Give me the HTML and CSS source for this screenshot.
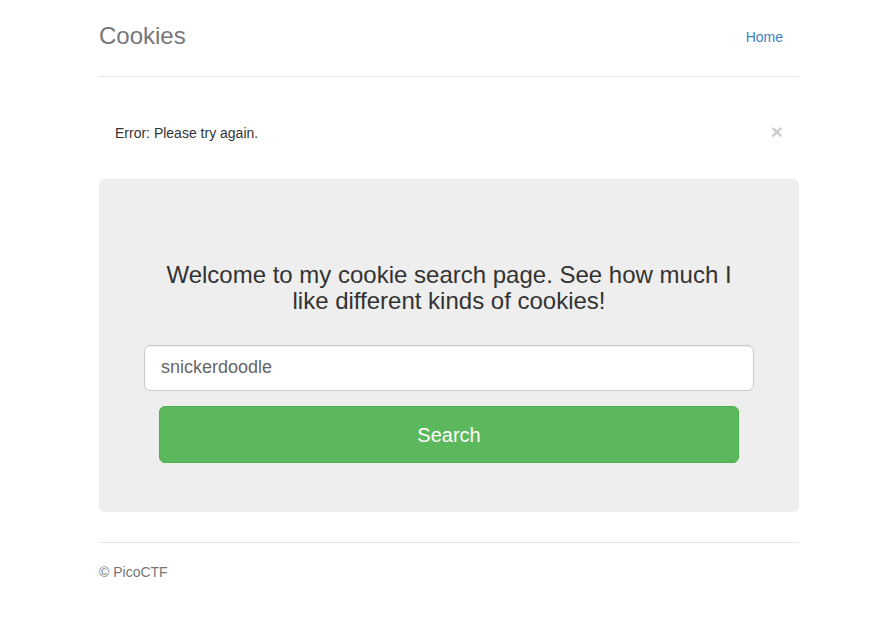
FILE: index.html
```html
<!DOCTYPE html>
<html lang="en">
<head>
<meta charset="utf-8">
<title>Cookies</title>
<link rel="stylesheet" href="styles.css">
</head>
<body>
<div class="container">
  <div class="header">
    <h3 class="brand">Cookies</h3>
    <nav class="nav">
      <a class="nav-link" href="#">Home</a>
    </nav>
  </div>

  <div class="alert">
    <span class="alert-text">Error: Please try again.</span>
    <button class="close" type="button">&times;</button>
  </div>

  <div class="jumbotron">
    <h3 class="lead">Welcome to my cookie search page. See how much I like different kinds of cookies!</h3>
    <form class="search-form">
      <div class="row">
        <input class="form-input" type="text" value="snickerdoodle">
      </div>
      <button class="btn-search" type="button">Search</button>
    </form>
  </div>

  <footer class="footer">
    <p>&copy; PicoCTF</p>
  </footer>
</div>
</body>
</html>
```

FILE: styles.css
```css
* { box-sizing: border-box; }

html, body {
  margin: 0;
  padding: 0;
  background: #fff;
}

body {
  font-family: "Liberation Sans", Arial, Helvetica, sans-serif;
  font-size: 14px;
  line-height: 1.42857;
  color: #333;
  padding-top: 16px;
}

.container {
  width: 708px;
  margin: 0 auto;
  padding-left: 8px;
}

.header {
  display: flex;
  justify-content: space-between;
  align-items: center;
  padding-bottom: 20px;
  border-bottom: 1px solid #e5e5e5;
  margin-bottom: 30px;
}

.brand {
  margin: 0;
  font-size: 24px;
  font-weight: 500;
  line-height: 40px;
  color: #777;
}

.nav {
  display: flex;
}

.nav-link {
  display: block;
  padding: 11px 16px 9px 14px;
  line-height: 20px;
  color: #3d83c6;
  text-decoration: none;
}

.alert {
  display: flex;
  justify-content: space-between;
  align-items: center;
  padding: 15px;
  border: 1px solid transparent;
  border-radius: 4px;
  margin-bottom: 20px;
  color: #333;
  height: 52px;
}

.alert-text {
  line-height: 20px;
}

.close {
  background: none;
  border: 0;
  padding: 0;
  margin: -3px 0 0 0;
  font-family: "Liberation Sans", Arial, sans-serif;
  font-size: 21px;
  font-weight: 700;
  line-height: 1;
  color: #000;
  opacity: 0.2;
  cursor: pointer;
}

.jumbotron {
  background: #eee;
  border-radius: 6px;
  padding: 48px 60px 49px;
  text-align: center;
  margin-bottom: 30px;
}

.lead {
  margin: 35px 0 30px;
  font-size: 24px;
  font-weight: 500;
  line-height: 26.4px;
  color: #333;
}

.search-form {
  margin: 0;
}

.row {
  margin: 0 -15px;
}

.form-input {
  display: block;
  width: 100%;
  height: 46px;
  padding: 10px 16px;
  font-family: "Liberation Sans", Arial, sans-serif;
  font-size: 18px;
  line-height: 1.33;
  color: #666;
  background: #fff;
  border: 1px solid #ccc;
  border-radius: 6px;
  box-shadow: inset 0 1px 1px rgba(0,0,0,.075);
}

.btn-search {
  display: block;
  width: 100%;
  height: 57px;
  margin-top: 15px;
  padding: 2px 0 0;
  font-family: "Liberation Sans", Arial, sans-serif;
  font-size: 20px;
  color: #fff;
  background: #5cb85c;
  border: 1px solid #4cae4c;
  border-radius: 6px;
  cursor: pointer;
}

.footer {
  border-top: 1px solid #e5e5e5;
  padding-top: 20px;
  color: #777;
}

.footer p {
  margin: 0 0 10px;
}
```
